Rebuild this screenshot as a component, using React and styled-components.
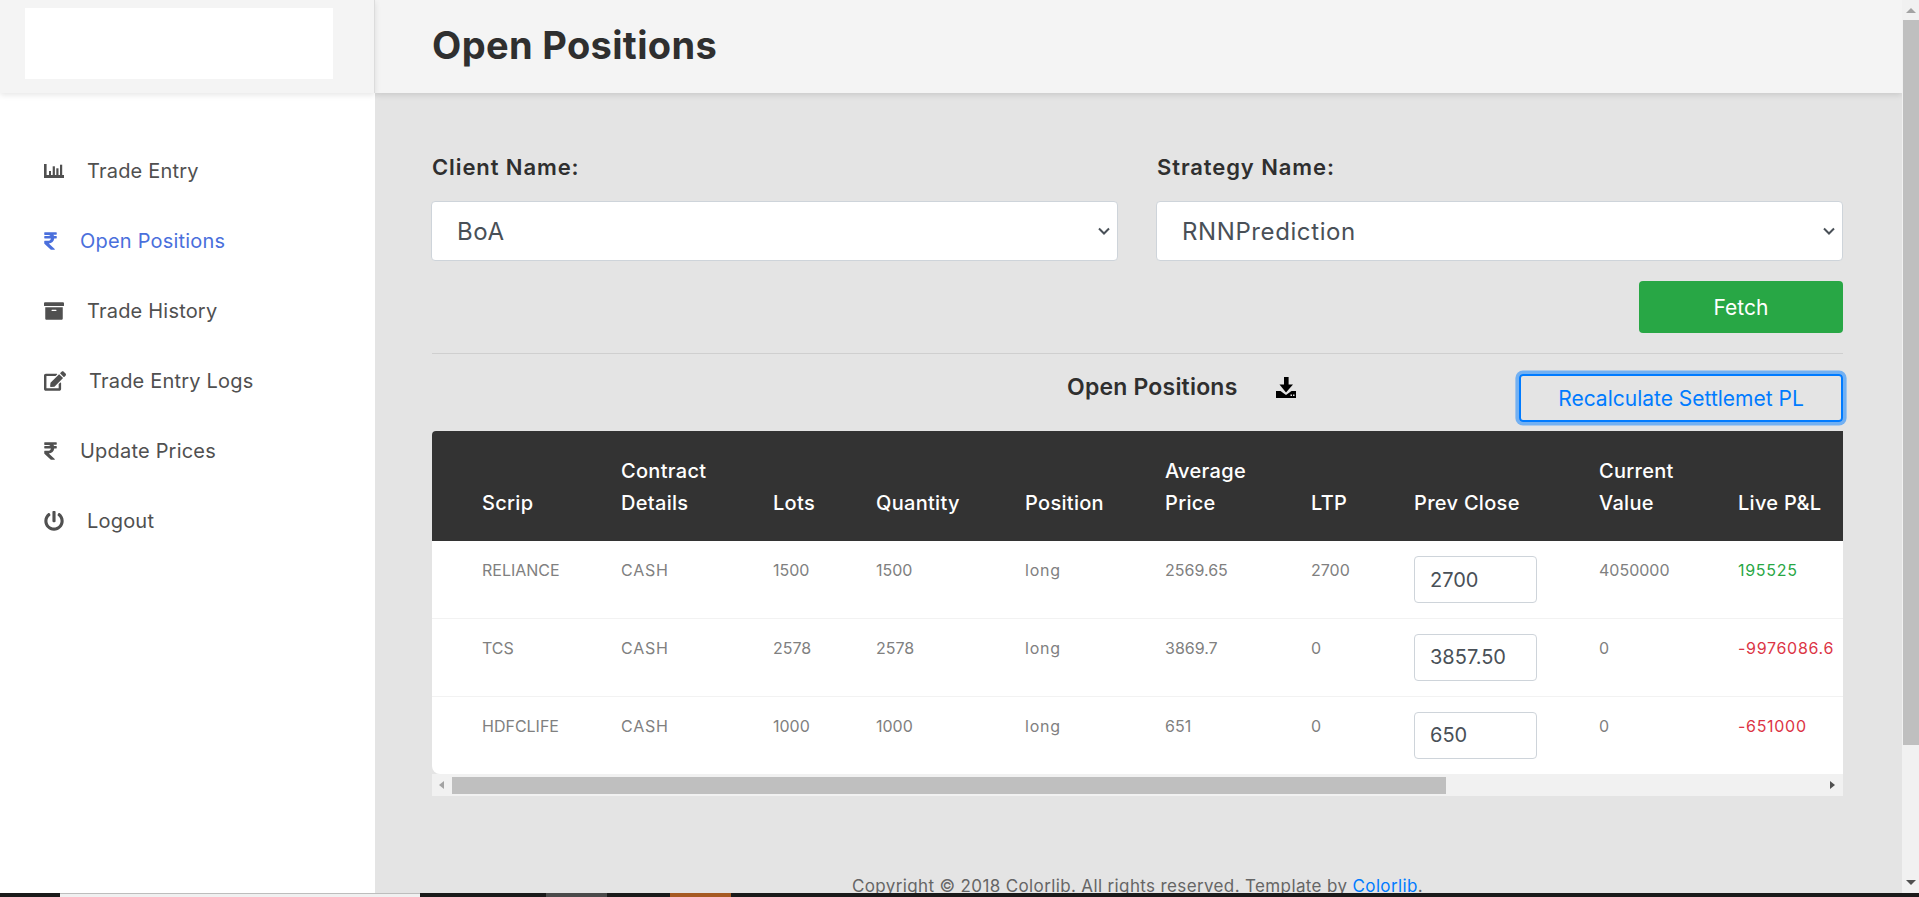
import React from 'react';
import styled, { createGlobalStyle } from 'styled-components';
import { FaRupeeSign, FaArchive, FaEdit, FaPowerOff } from 'react-icons/fa';

const GlobalStyle = createGlobalStyle`
    html, body {
        margin: 0;
        padding: 0;
        height: 897px;
        overflow: hidden;
    }
    * { box-sizing: border-box; }
    body {
        font-family: "Inter", "Liberation Sans", sans-serif;
        color: #333;
    }
`;

const FONT_BODY = '"Inter", "Liberation Sans", sans-serif';

const CHEVRON = `url("data:image/svg+xml,%3Csvg xmlns='http://www.w3.org/2000/svg' width='12' height='8' viewBox='0 0 12 8'%3E%3Cpath d='M1 1.5l5 5 5-5' fill='none' stroke='%23495057' stroke-width='2'/%3E%3C/svg%3E")`;

const NAV_ITEMS = [
    { label: 'Trade Entry', icon: <ChartIcon /> },
    { label: 'Open Positions', icon: <RupeeIcon />, active: true },
    { label: 'Trade History', icon: <FaArchive size={20} /> },
    { label: 'Trade Entry Logs', icon: <FaEdit size={22} /> },
    { label: 'Update Prices', icon: <RupeeIcon /> },
    { label: 'Logout', icon: <FaPowerOff size={20} /> },
];

const COLUMNS = [
    ['Scrip'],
    ['Contract', 'Details'],
    ['Lots'],
    ['Quantity'],
    ['Position'],
    ['Average', 'Price'],
    ['LTP'],
    ['Prev Close'],
    ['Current', 'Value'],
    ['Live P&L'],
];

const COL_WIDTHS = [189, 152, 103, 149, 140, 146, 103, 185, 139, 250];
const TABLE_WIDTH = COL_WIDTHS.reduce((sum, w) => sum + w, 0);

const POSITIONS = [
    { scrip: 'RELIANCE', lots: 1500, qty: 1500, avg: '2569.65', ltp: 2700, prev: '2700', value: 4050000, pl: 195525 },
    { scrip: 'TCS', lots: 2578, qty: 2578, avg: '3869.7', ltp: 0, prev: '3857.50', value: 0, pl: -9976086.6 },
    { scrip: 'HDFCLIFE', lots: 1000, qty: 1000, avg: '651', ltp: 0, prev: '650', value: 0, pl: -651000 },
];

function ChartIcon() {
    return (
        <svg width="20" height="14" viewBox="0 0 20 14" fill="currentColor">
            <rect x="0" y="0" width="2.6" height="14" />
            <rect x="0" y="11" width="20" height="3" />
            <rect x="5" y="7" width="2" height="4" />
            <rect x="8.7" y="2.3" width="2.2" height="8.7" />
            <rect x="12.3" y="4.3" width="2.2" height="6.7" />
            <rect x="16" y="0.7" width="2.2" height="10.3" />
        </svg>
    );
}

function RupeeIcon() {
    return <FaRupeeSign style={{ width: 13, height: 20 }} />;
}

function DownloadIcon() {
    return (
        <svg width="20" height="21" viewBox="0 0 20 21" fill="#000">
            <path d="M8 0h4.6v7.5h4.4l-7 8-6.5-8H8z" />
            <path d="M0 14h4.5l5.5 4 5.5-4H20v7H0z" />
            <rect x="14.5" y="17.5" width="1.5" height="1.5" fill="#e4e4e4" />
            <rect x="17" y="17.5" width="1.5" height="1.5" fill="#e4e4e4" />
        </svg>
    );
}

function App() {
    return (
        <>
            <GlobalStyle />
            <Screen>
                <Viewport>
                    <Sidebar>
                        <LogoBar>
                            <LogoBox />
                        </LogoBar>
                        <Nav>
                            {NAV_ITEMS.map(item => (
                                <NavItem key={item.label} $active={item.active}>
                                    {item.icon}
                                    <span>{item.label}</span>
                                </NavItem>
                            ))}
                        </Nav>
                    </Sidebar>
                    <Main>
                        <PageHeader>
                            <h1>Open Positions</h1>
                        </PageHeader>
                        <Content>
                            <FilterRow>
                                <Field>
                                    <label htmlFor="client">Client Name:</label>
                                    <Select id="client" defaultValue="BoA">
                                        <option>BoA</option>
                                    </Select>
                                </Field>
                                <Field>
                                    <label htmlFor="strategy">Strategy Name:</label>
                                    <Select id="strategy" defaultValue="RNNPrediction">
                                        <option>RNNPrediction</option>
                                    </Select>
                                </Field>
                            </FilterRow>
                            <FetchRow>
                                <FetchButton>Fetch</FetchButton>
                            </FetchRow>
                            <Divider />
                            <TableTitleRow>
                                <TableTitle>
                                    <h2>Open Positions</h2>
                                    <DownloadIcon />
                                </TableTitle>
                                <RecalcButton>Recalculate Settlemet PL</RecalcButton>
                            </TableTitleRow>
                            <TableWrap>
                                <Table style={{ width: TABLE_WIDTH }}>
                                    <colgroup>
                                        {COL_WIDTHS.map((w, i) => <col key={i} width={w} />)}
                                    </colgroup>
                                    <thead>
                                        <tr>
                                            {COLUMNS.map(lines => (
                                                <th key={lines[0]}>
                                                    {lines.map(line => <div key={line}>{line}</div>)}
                                                </th>
                                            ))}
                                        </tr>
                                    </thead>
                                    <tbody>
                                        {POSITIONS.map(row => (
                                            <tr key={row.scrip}>
                                                <td>{row.scrip}</td>
                                                <WideCell>CASH</WideCell>
                                                <td>{row.lots}</td>
                                                <td>{row.qty}</td>
                                                <WideCell>long</WideCell>
                                                <td>{row.avg}</td>
                                                <td>{row.ltp}</td>
                                                <td><PriceInput defaultValue={row.prev} /></td>
                                                <td>{row.value}</td>
                                                <PlCell $positive={row.pl > 0}>{row.pl}</PlCell>
                                            </tr>
                                        ))}
                                    </tbody>
                                </Table>
                            </TableWrap>
                            <HScroll>
                                <ArrowLeft />
                                <HThumb />
                                <ArrowRight />
                            </HScroll>
                            <Footer>
                                Copyright © 2018 Colorlib. All rights reserved. Template by <a href="#colorlib">Colorlib</a>.
                            </Footer>
                        </Content>
                    </Main>
                    <VScroll>
                        <ArrowUp />
                        <VThumb />
                        <ArrowDown />
                    </VScroll>
                </Viewport>
                <Taskbar>
                    <TaskSlot $w={60} />
                    <TaskSlot $w={360} $bg="#f0f0f0" $border />
                    <TaskSlot $w={126} />
                    <TaskSlot $w={61} $bg="#4a4a4a" />
                    <TaskSlot $w={63} />
                    <TaskSlot $w={61} $bg="#a65a22" />
                </Taskbar>
            </Screen>
        </>
    );
}

const Screen = styled.div`
    width: 1919px;
    height: 897px;
    display: flex;
    flex-direction: column;
    overflow: hidden;
`;

const Viewport = styled.div`
    flex: 1;
    min-height: 0;
    display: flex;
    overflow: hidden;
`;

const Sidebar = styled.aside`
    width: 375px;
    flex-shrink: 0;
    background: #fff;
    position: relative;
    z-index: 2;
`;

const LogoBar = styled.div`
    height: 93px;
    background: #f4f4f4;
    padding: 8px 41px 14px 25px;
    box-shadow: 0 2px 6px rgba(0, 0, 0, 0.1);
    border-right: 1px solid #dcdcdc;
`;

const LogoBox = styled.div`
    height: 71px;
    background: #fff;
`;

const Nav = styled.nav`
    padding-top: 43px;
    display: flex;
    flex-direction: column;
`;

const NavItem = styled.a`
    height: 70px;
    padding-left: 44px;
    display: flex;
    align-items: center;
    gap: 23px;
    font-size: 20px;
    letter-spacing: 0.2px;
    color: ${props => (props.$active ? '#4a6fdc' : '#505050')};
    svg { flex-shrink: 0; }
`;

const Main = styled.main`
    flex: 1;
    min-width: 0;
    background: #e4e4e4;
    display: flex;
    flex-direction: column;
`;

const PageHeader = styled.header`
    height: 93px;
    flex-shrink: 0;
    background: #f4f4f4;
    padding-left: 57px;
    display: flex;
    align-items: center;
    box-shadow: 0 2px 6px rgba(0, 0, 0, 0.12);
    h1 {
        margin: 0 0 3px;
        font-size: 38px;
        font-weight: 700;
        letter-spacing: 0.35px;
        color: #2f2f2f;
    }
`;

const Content = styled.div`
    padding: 60px 59px 0 57px;
`;

const FilterRow = styled.div`
    margin-left: -1px;
    display: grid;
    grid-template-columns: 1fr 1fr;
    gap: 38px;
`;

const Field = styled.div`
    label {
        display: block;
        height: 48px;
        padding: 1px 0 0 1px;
        font-size: 22px;
        font-weight: 600;
        letter-spacing: 0.9px;
        color: #2f2f2f;
    }
`;

const Select = styled.select`
    width: 100%;
    height: 60px;
    padding: 0 22px 0 25px;
    appearance: none;
    background: #fff ${CHEVRON} no-repeat right 7px center;
    border: 1px solid #ced4da;
    border-radius: 4px;
    font-family: ${FONT_BODY};
    font-size: 24px;
    letter-spacing: 0.6px;
    color: #495057;
`;

const FetchRow = styled.div`
    display: flex;
    justify-content: flex-end;
    margin-top: 20px;
`;

const FetchButton = styled.button`
    width: 204px;
    height: 52px;
    background: #28a745;
    border: none;
    border-radius: 4px;
    color: #fff;
    font-family: ${FONT_BODY};
    font-size: 21px;
`;

const Divider = styled.hr`
    margin: 20px 0 0;
    border: none;
    border-top: 1px solid #cfcfcf;
`;

const TableTitleRow = styled.div`
    height: 77px;
    display: flex;
    align-items: flex-start;
`;

const TableTitle = styled.div`
    margin-left: 635px;
    padding-top: 19px;
    display: flex;
    align-items: center;
    gap: 39px;
    h2 {
        margin: 0;
        font-size: 23px;
        font-weight: 600;
        letter-spacing: 0.2px;
        color: #2f2f2f;
    }
`;

const RecalcButton = styled.button`
    margin-left: auto;
    margin-top: 20px;
    width: 324px;
    height: 48px;
    background: transparent;
    border: 2px solid #007bff;
    border-radius: 4px;
    box-shadow: 0 0 0 3.6px rgba(0, 123, 255, 0.5);
    color: #007bff;
    font-family: ${FONT_BODY};
    font-size: 21px;
`;

const TableWrap = styled.div`
    overflow: hidden;
    background: #fff;
    border-radius: 4px 0 0 8px;
`;

const Table = styled.table`
    table-layout: fixed;
    border-collapse: collapse;
    th {
        height: 110px;
        padding: 0 0 22px;
        background: #333;
        color: #fff;
        font-size: 20px;
        font-weight: 500;
        letter-spacing: 0.3px;
        line-height: 32px;
        text-align: left;
        vertical-align: bottom;
    }
    td {
        padding: 16px 0 0;
        height: 77px;
        font-size: 16px;
        line-height: 26px;
        color: #808080;
        vertical-align: top;
        white-space: nowrap;
    }
    th:first-child, td:first-child { padding-left: 50px; }
    tbody tr { border-bottom: 1px solid #f2f2f2; }
    tbody tr:last-child { border-bottom: none; }
    tbody tr:nth-child(n + 2) td { height: 78px; }
`;

const WideCell = styled.td`
    && { letter-spacing: 0.8px; }
`;

const PlCell = styled.td`
    && {
        letter-spacing: 0.7px;
        color: ${props => (props.$positive ? '#28a745' : '#dc3545')};
    }
`;

const PriceInput = styled.input`
    display: block;
    width: 123px;
    height: 47px;
    margin-top: -1px;
    padding: 0 15px;
    background: #fff;
    border: 1px solid #ced4da;
    border-radius: 4px;
    font-family: ${FONT_BODY};
    font-size: 20px;
    color: #495057;
`;

const HScroll = styled.div`
    height: 22px;
    background: #f1f1f1;
    display: flex;
    align-items: center;
    padding: 0 0 0 20px;
    position: relative;
`;

const HThumb = styled.div`
    width: 994px;
    height: 17px;
    background: #bfbfbf;
`;

const ArrowLeft = styled.i`
    position: absolute;
    left: 7px;
    top: 7px;
    border: 4px solid transparent;
    border-left: none;
    border-right: 5px solid #a3a3a3;
`;

const ArrowRight = styled.i`
    position: absolute;
    right: 8px;
    top: 7px;
    border: 4px solid transparent;
    border-right: none;
    border-left: 5px solid #505050;
`;

const Footer = styled.footer`
    margin-top: 78px;
    text-align: center;
    font-size: 17px;
    letter-spacing: 0.37px;
    line-height: 24px;
    color: #666;
    a {
        color: #007bff;
        text-decoration: none;
    }
`;

const VScroll = styled.div`
    width: 17px;
    flex-shrink: 0;
    background: #f1f1f1;
    position: relative;
    padding-top: 20px;
    padding-left: 1px;
`;

const VThumb = styled.div`
    width: 16px;
    height: 725px;
    background: #bfbfbf;
`;

const ArrowUp = styled.i`
    position: absolute;
    top: 8px;
    left: 4px;
    border: 5px solid transparent;
    border-top: none;
    border-bottom: 5px solid #a3a3a3;
`;

const ArrowDown = styled.i`
    position: absolute;
    bottom: 8px;
    left: 4px;
    border: 5px solid transparent;
    border-bottom: none;
    border-top: 5px solid #505050;
`;

const Taskbar = styled.div`
    height: 4px;
    flex-shrink: 0;
    background: #1a1a1a;
    display: flex;
`;

const TaskSlot = styled.div`
    width: ${props => props.$w}px;
    background: ${props => props.$bg || 'transparent'};
    border-top: ${props => (props.$border ? '1px solid #bdbdbd' : 'none')};
`;

export default App;
